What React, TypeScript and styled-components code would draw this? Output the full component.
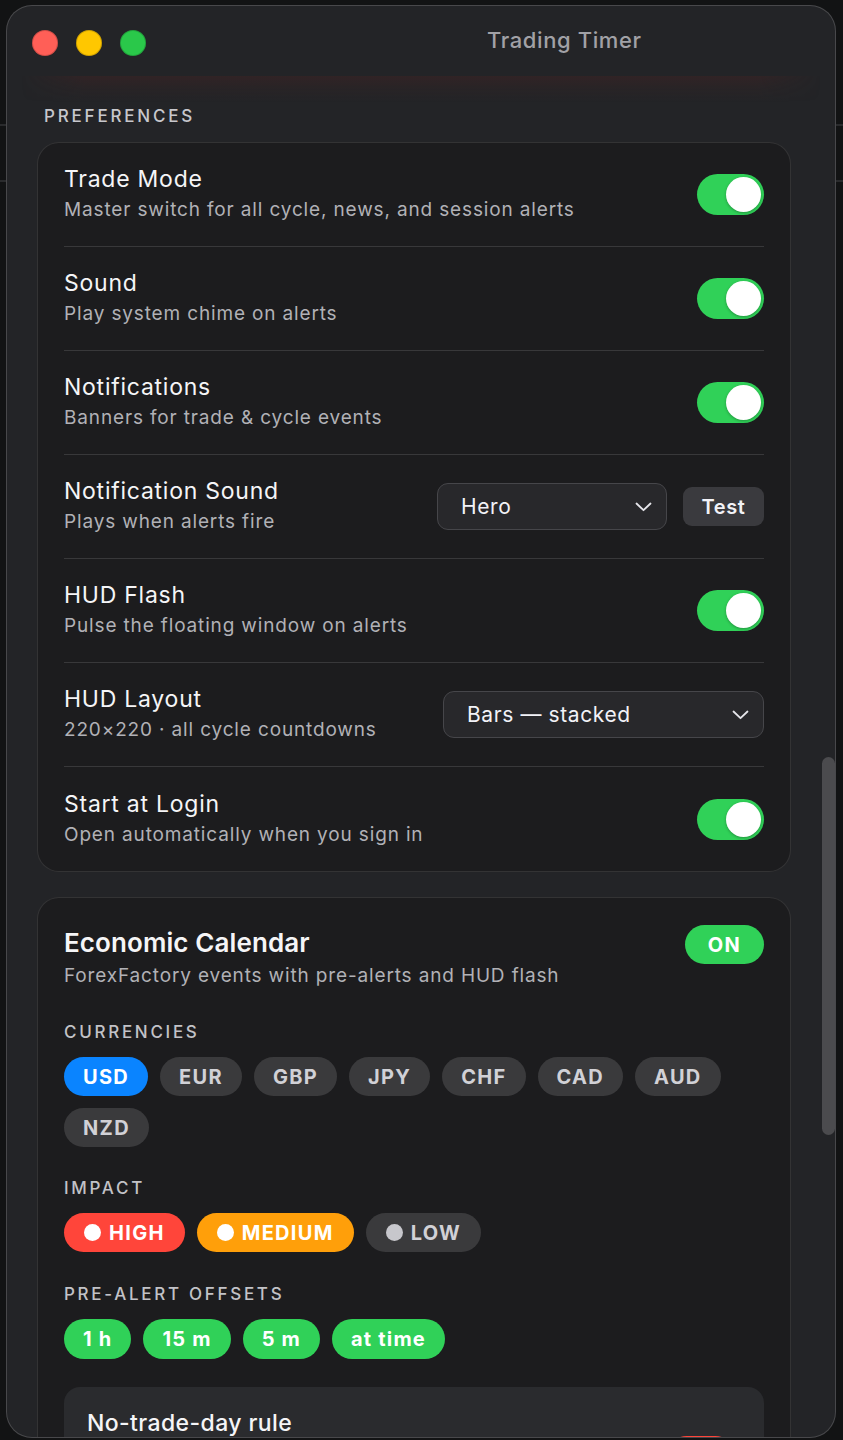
import React from "react";
import styled, { createGlobalStyle } from "styled-components";

const Global = createGlobalStyle`
  html, body { margin: 0; padding: 0; background: #121314; }
  body { font-family: Inter, "Noto Sans", sans-serif; -webkit-font-smoothing: antialiased; }
  * { box-sizing: border-box; }
`;

const Desktop = styled.div`
  height: 1440px;
  padding: 5px 7px 0 6px;
  overflow: hidden;
  background:
    linear-gradient(180deg, transparent 124px, #2a2b2d 124px, #2a2b2d 126px, transparent 126px),
    linear-gradient(180deg, transparent 180px, #2a2b2d 180px, #2a2b2d 182px, transparent 182px),
    #121314;
`;

const Window = styled.div`
  position: relative;
  width: 830px;
  height: 1433px;
  border-radius: 26px;
  border: 1px solid rgba(255, 255, 255, 0.17);
  background: #232427;
  overflow: hidden;
  display: flex;
  flex-direction: column;
`;

const TitleBar = styled.div`
  height: 70px;
  flex: none;
  display: flex;
  align-items: flex-start;
  padding: 24px 0 0 25px;
`;

const Lights = styled.div`
  display: flex;
  gap: 18px;
`;

const Light = styled.span<{ $c: string }>`
  width: 26px;
  height: 26px;
  border-radius: 50%;
  background: ${(p) => p.$c};
  box-shadow: inset 0 0 0 1px rgba(0, 0, 0, 0.18);
`;

const Title = styled.div`
  margin-left: 341px;
  margin-top: -3px;
  font-size: 22px;
  line-height: 26px;
  font-weight: 500;
  color: #a1a1a6;
  letter-spacing: 0.6px;
`;

const Glow = styled.div`
  height: 26px;
  flex: none;
  margin: 0 14px;
  background: linear-gradient(180deg, rgba(95, 36, 34, 0.24) 0%, rgba(95, 36, 34, 0.1) 45%, rgba(35, 36, 39, 0) 100%);
  -webkit-mask-image: linear-gradient(90deg, transparent 0%, #000 8%, #000 92%, transparent 100%);
`;

const Content = styled.div`
  padding: 4px 44px 0 30px;
`;

const SectionLabel = styled.div`
  font-size: 17px;
  line-height: 20px;
  font-weight: 500;
  letter-spacing: 2.8px;
  color: #c7c7cc;
  margin: 0 0 16px 7px;
`;

const Card = styled.div`
  background: #1c1c1e;
  border: 1px solid rgba(255, 255, 255, 0.1);
  border-radius: 22px;
  padding: 0 26px;
`;

const Row = styled.div`
  height: 104px;
  display: flex;
  align-items: center;
  justify-content: space-between;
  border-bottom: 1px solid #38383a;
  &:last-child { border-bottom: none; }
`;

const TextBlock = styled.div`
  display: flex;
  flex-direction: column;
  gap: 5px;
`;

const RowTitle = styled.div`
  font-size: 23px;
  line-height: 28px;
  color: #f5f5f7;
  letter-spacing: 0.75px;
  margin-top: -2px;
`;

const RowSub = styled.div`
  font-size: 19px;
  line-height: 24px;
  color: #b1b1b6;
  letter-spacing: 0.85px;
`;

const ToggleTrack = styled.div<{ $on: boolean }>`
  width: 67px;
  height: 41px;
  border-radius: 21px;
  padding: 3px;
  display: flex;
  justify-content: ${(p) => (p.$on ? "flex-end" : "flex-start")};
  background: ${(p) => (p.$on ? "#30d158" : "#3a3a3c")};
`;

const Knob = styled.span`
  width: 35px;
  height: 35px;
  border-radius: 50%;
  background: #ffffff;
  box-shadow: 0 1px 3px rgba(0, 0, 0, 0.3);
`;

const Controls = styled.div`
  display: flex;
  align-items: center;
  gap: 16px;
`;

const Select = styled.div<{ $w: number }>`
  width: ${(p) => p.$w}px;
  height: 47px;
  border-radius: 11px;
  background: #28282b;
  border: 1px solid #46464a;
  display: flex;
  align-items: center;
  justify-content: space-between;
  padding: 0 14px 0 23px;
  font-size: 21px;
  letter-spacing: 0.6px;
  color: #f2f2f7;
`;

const TestButton = styled.div`
  width: 81px;
  height: 39px;
  border-radius: 9px;
  background: #3a3a3e;
  display: flex;
  align-items: center;
  justify-content: center;
  font-size: 20px;
  font-weight: 600;
  color: #f2f2f7;
  letter-spacing: 0.6px;
`;

const CalCard = styled(Card)`
  margin-top: 25px;
  padding: 29px 26px 40px;
`;

const Header = styled.div`
  display: flex;
  justify-content: space-between;
  align-items: flex-start;
`;

const CalTitle = styled.div`
  font-size: 26px;
  line-height: 32px;
  font-weight: 600;
  color: #f5f5f7;
  letter-spacing: 0.1px;
`;

const Pill = styled.div<{ $bg: string; $mt: number }>`
  width: 79px;
  height: 39px;
  margin-top: ${(p) => p.$mt}px;
  border-radius: 20px;
  background: ${(p) => p.$bg};
  display: flex;
  align-items: center;
  justify-content: center;
  font-size: 20px;
  font-weight: 700;
  letter-spacing: 1.5px;
  color: #ffffff;
`;

const Section = styled.div<{ $mt: number }>`
  margin-top: ${(p) => p.$mt}px;
`;

const GroupLabel = styled.div`
  font-size: 17px;
  line-height: 20px;
  font-weight: 500;
  letter-spacing: 2.7px;
  color: #c2c2c7;
  margin-bottom: 15px;
`;

const ChipRow = styled.div`
  display: flex;
  flex-wrap: wrap;
  gap: 12px;
`;

const Chip = styled.div<{ $bg: string; $fg: string }>`
  height: 39px;
  border-radius: 20px;
  padding: 0 19px;
  display: flex;
  align-items: center;
  gap: 8px;
  background: ${(p) => p.$bg};
  color: ${(p) => p.$fg};
  font-size: 20px;
  font-weight: 700;
  letter-spacing: 1.3px;
`;

const ImpactChip = styled(Chip)`
  padding: 0 20px;
  letter-spacing: 1.3px;
`;

const OffsetChip = styled(Chip)`
  height: 40px;
  padding: 0 19px;
  letter-spacing: 1.2px;
`;

const Dot = styled.span<{ $c: string }>`
  width: 17px;
  height: 17px;
  border-radius: 50%;
  background: ${(p) => p.$c};
`;

const SubCard = styled.div`
  margin-top: 28px;
  background: #2a2b2e;
  border-radius: 16px;
  padding: 22px 23px 30px;
`;

const SubHeader = styled.div`
  display: flex;
  justify-content: space-between;
  align-items: flex-start;
`;

const SubTitle = styled.div`
  font-size: 23px;
  line-height: 28px;
  font-weight: 500;
  color: #f5f5f7;
  letter-spacing: 0.4px;
`;

const SubPill = styled.div`
  width: 68px;
  height: 39px;
  margin-top: 27px;
  margin-right: 6px;
  border-radius: 20px;
  background: #ff453a;
`;

const ScrollThumb = styled.div`
  position: absolute;
  right: 0;
  top: 751px;
  width: 13px;
  height: 378px;
  border-radius: 7px;
  background: #4b4b4e;
`;

const Chevron = () => (
  <svg width="17" height="10" viewBox="0 0 17 10" fill="none">
    <path d="M1.5 1.5 L8.5 8.2 L15.5 1.5" stroke="#e5e5ea" strokeWidth="1.8" strokeLinecap="round" strokeLinejoin="round" />
  </svg>
);

const Toggle = ({ on }: { on: boolean }) => (
  <ToggleTrack $on={on}>
    <Knob />
  </ToggleTrack>
);

const rows: { title: string; sub: string; kind: "toggle" | "sound" | "layout" }[] = [
  { title: "Trade Mode", sub: "Master switch for all cycle, news, and session alerts", kind: "toggle" },
  { title: "Sound", sub: "Play system chime on alerts", kind: "toggle" },
  { title: "Notifications", sub: "Banners for trade & cycle events", kind: "toggle" },
  { title: "Notification Sound", sub: "Plays when alerts fire", kind: "sound" },
  { title: "HUD Flash", sub: "Pulse the floating window on alerts", kind: "toggle" },
  { title: "HUD Layout", sub: "220×220 · all cycle countdowns", kind: "layout" },
  { title: "Start at Login", sub: "Open automatically when you sign in", kind: "toggle" },
];

const currencies = ["USD", "EUR", "GBP", "JPY", "CHF", "CAD", "AUD", "NZD"];
const offsets = ["1 h", "15 m", "5 m", "at time"];

export default function App() {
  return (
    <>
      <Global />
      <Desktop>
        <Window>
          <TitleBar>
            <Lights>
              <Light $c="#ff5f57" />
              <Light $c="#ffc700" />
              <Light $c="#2ac84a" />
            </Lights>
            <Title>Trading Timer</Title>
          </TitleBar>
          <Glow />
          <Content>
            <SectionLabel>PREFERENCES</SectionLabel>
            <Card>
              {rows.map((r) => (
                <Row key={r.title}>
                  <TextBlock>
                    <RowTitle>{r.title}</RowTitle>
                    <RowSub>{r.sub}</RowSub>
                  </TextBlock>
                  {r.kind === "toggle" && <Toggle on />}
                  {r.kind === "sound" && (
                    <Controls>
                      <Select $w={230}>
                        <span>Hero</span>
                        <Chevron />
                      </Select>
                      <TestButton>Test</TestButton>
                    </Controls>
                  )}
                  {r.kind === "layout" && (
                    <Select $w={321}>
                      <span>Bars — stacked</span>
                      <Chevron />
                    </Select>
                  )}
                </Row>
              ))}
            </Card>

            <CalCard>
              <Header>
                <TextBlock>
                  <CalTitle>Economic Calendar</CalTitle>
                  <RowSub>ForexFactory events with pre-alerts and HUD flash</RowSub>
                </TextBlock>
                <Pill $bg="#30d158" $mt={-2}>ON</Pill>
              </Header>

              <Section $mt={34}>
                <GroupLabel>CURRENCIES</GroupLabel>
                <ChipRow>
                  {currencies.map((c) => (
                    <Chip key={c} $bg={c === "USD" ? "#0a84ff" : "#3a3a3c"} $fg={c === "USD" ? "#ffffff" : "#d1d1d6"}>
                      {c}
                    </Chip>
                  ))}
                </ChipRow>
              </Section>

              <Section $mt={31}>
                <GroupLabel>IMPACT</GroupLabel>
                <ChipRow>
                  <ImpactChip $bg="#ff453a" $fg="#ffffff">
                    <Dot $c="#ffffff" />
                    HIGH
                  </ImpactChip>
                  <ImpactChip $bg="#ff9f0a" $fg="#ffffff">
                    <Dot $c="#ffffff" />
                    MEDIUM
                  </ImpactChip>
                  <ImpactChip $bg="#3a3a3c" $fg="#d1d1d6">
                    <Dot $c="#c7c7cc" />
                    LOW
                  </ImpactChip>
                </ChipRow>
              </Section>

              <Section $mt={32}>
                <GroupLabel>PRE-ALERT OFFSETS</GroupLabel>
                <ChipRow>
                  {offsets.map((o) => (
                    <OffsetChip key={o} $bg="#30d158" $fg="#ffffff">
                      {o}
                    </OffsetChip>
                  ))}
                </ChipRow>
              </Section>

              <SubCard>
                <SubHeader>
                  <SubTitle>No-trade-day rule</SubTitle>
                  <SubPill />
                </SubHeader>
              </SubCard>
            </CalCard>
          </Content>
          <ScrollThumb />
        </Window>
      </Desktop>
    </>
  );
}
